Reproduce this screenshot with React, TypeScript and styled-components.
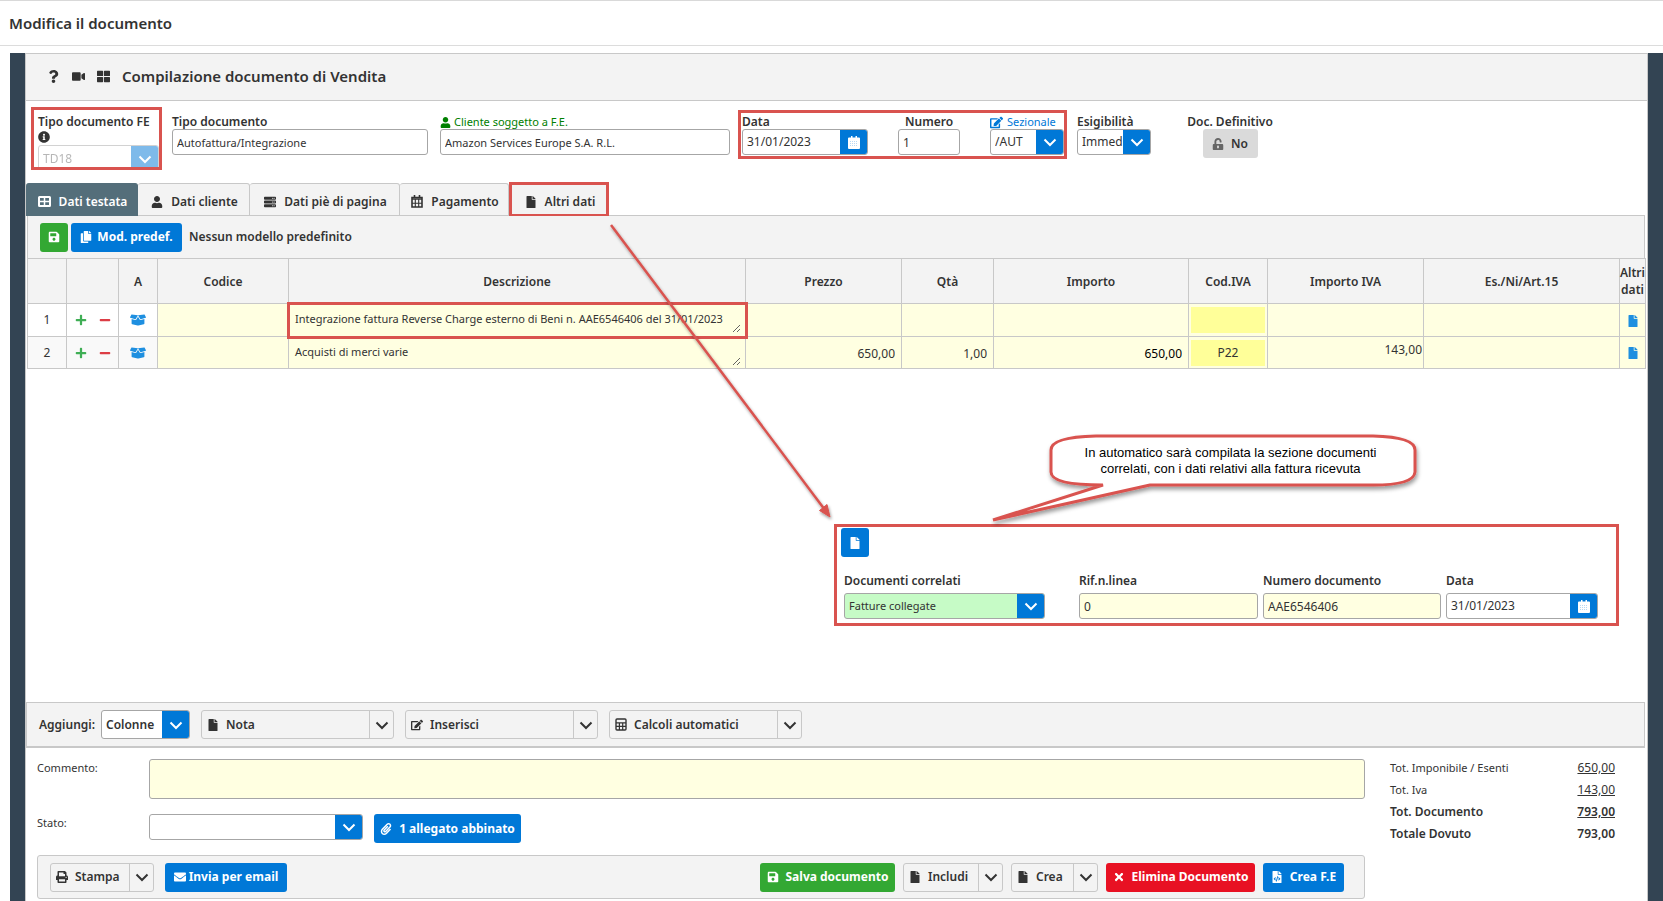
import React from 'react';
import styled, { createGlobalStyle, css } from 'styled-components';
import {
  FaQuestion, FaVideo, FaThLarge, FaInfoCircle, FaUser, FaEdit, FaUnlockAlt,
  FaServer, FaFile, FaSave, FaCopy, FaPlus, FaMinus, FaBoxOpen, FaPaperclip, FaPrint,
  FaEnvelope, FaTimes, FaFileCode,
} from 'react-icons/fa';

const red = '#d9534f';
const blue = '#0078d7';
const green = '#33a833';
const line = '#c8c8c8';
const field = '#a6a6a6';
const cream = '#ffffe1';
const grey = '#f3f3f3';
const ink = '#333';

const Global = createGlobalStyle`
  * { box-sizing: border-box; }
  body { margin: 0; background: #fff; }
  body, button, input, select, textarea {
    font-family: "Noto Sans", "Open Sans", sans-serif;
    font-size: 12px;
    line-height: 16px;
    color: ${ink};
  }
  button { cursor: pointer; }
`;

const Page = styled.div`
  min-height: 100vh;
  display: flex;
  flex-direction: column;
  border-top: 1px solid #d9d9d9;
`;
const TitleBar = styled.header`
  height: 45px;
  padding: 0 9px;
  display: flex;
  align-items: center;
  border-bottom: 1px solid #dcdcdc;
`;
const PageTitle = styled.h1`
  margin: 0;
  font-size: 15px;
  font-weight: 600;
  line-height: 20px;
`;
const Frame = styled.main`
  flex: 1;
  display: flex;
  margin: 7px 0 0 10px;
  padding: 0 15px;
  background: #334453;
`;
const Sheet = styled.div`
  position: relative;
  flex: 1;
  min-width: 0;
  display: flex;
  flex-direction: column;
  background: #fff;
  border: solid ${line};
  border-width: 1px 1px 0;
`;
const SheetHead = styled.div`
  height: 47px;
  padding: 0 0 2px 21px;
  display: flex;
  align-items: center;
  gap: 12px;
  background: ${grey};
  border-bottom: 1px solid ${line};
`;
const SheetTitle = styled.h2`
  margin: 0;
  font-size: 15px;
  font-weight: 600;
  line-height: 20px;
`;
const HeadIcon = styled.button`
  display: flex;
  padding: 0;
  border: 0;
  background: none;
  font-size: 13px;
`;

const FormRow = styled.div`
  display: grid;
  grid-template-columns: 131px 258px 288px 329px 74px 138px;
  column-gap: 10px;
  align-items: start;
  height: 82px;
  padding: 6px 0 0 5px;
`;
const outlined = css`
  border: 3px solid ${red};
`;
const TypeBox = styled.div`
  ${outlined}
  height: 63px;
  padding: 5px 0 0 4px;
  overflow: hidden;
`;
const DateBox = styled.div`
  ${outlined}
  display: flex;
  justify-content: space-between;
  height: 49px;
  margin-top: 3px;
  padding: 2px 0 0 1px;
`;
const Field = styled.div<{ $w?: number; $top?: number; $center?: boolean }>`
  display: flex;
  flex-direction: column;
  align-items: ${p => (p.$center ? 'center' : 'stretch')};
  margin-top: ${p => p.$top ?? 0}px;
  ${p => p.$w && `width: ${p.$w}px;`}
`;
const Label = styled.label<{ $tone?: string; $light?: boolean }>`
  display: flex;
  align-items: center;
  gap: 3px;
  height: 14px;
  white-space: nowrap;
  font-size: ${p => (p.$light ? 11 : 12)}px;
  font-weight: ${p => (p.$light ? 400 : 600)};
  color: ${p => p.$tone ?? ink};
`;
const LabelLink = styled.a`
  display: flex;
  align-items: center;
  gap: 4px;
  height: 14px;
  font-size: 11px;
  color: ${blue};
  text-decoration: none;
`;
const InfoLine = styled.div`
  display: flex;
  height: 16px;
  padding-top: 2px;
  font-size: 12px;
`;

const TextInput = styled.input<{ $fill?: string; $words?: boolean }>`
  width: 100%;
  height: 26px;
  padding: 0 4px;
  border: 1px solid ${field};
  border-radius: 3px;
  background: ${p => p.$fill ?? '#fff'};
  font-size: ${p => (p.$words ? 11 : 12)}px;
`;
const Combo = styled.div<{ $w?: number; $h?: number; $fill?: string; $faded?: boolean }>`
  display: flex;
  width: ${p => (p.$w ? `${p.$w}px` : '100%')};
  height: ${p => p.$h ?? 26}px;
  border: 1px solid ${field};
  border-radius: 3px;
  overflow: hidden;
  background: ${p => p.$fill ?? '#fff'};
  opacity: ${p => (p.$faded ? 0.5 : 1)};
`;
const comboPart = css`
  flex: 1;
  min-width: 0;
  padding: 0 0 0 4px;
  border: 0;
  background: transparent;
`;
const ComboSelect = styled.select<{ $bold?: boolean; $words?: boolean }>`
  ${comboPart}
  appearance: none;
  font-size: ${p => (p.$words ? 11 : 12)}px;
  font-weight: ${p => (p.$bold ? 600 : 400)};
`;
const ComboInput = styled.input`
  ${comboPart}
`;
const comboTail = css`
  display: flex;
  align-items: center;
  justify-content: center;
  width: 28px;
  margin: -1px -1px -1px 0;
  padding: 0;
  border: 0;
  flex: none;
  background: ${blue};
  color: #fff;
`;
const ComboArrow = styled.span`
  ${comboTail}
  pointer-events: none;
`;
const ComboButton = styled.button`
  ${comboTail}
`;

const Tabs = styled.nav`
  display: flex;
  height: 33px;
  margin-right: 2px;
  border-bottom: 1px solid ${line};
`;
const Tab = styled.button<{ $w: number; $active?: boolean; $marked?: boolean }>`
  display: flex;
  align-items: center;
  justify-content: center;
  gap: 8px;
  width: ${p => p.$w}px;
  height: 33px;
  padding: 4px 0 0 2px;
  border: 1px solid ${line};
  border-left-width: 0;
  border-radius: 3px 3px 0 0;
  background: ${grey};
  font-weight: 600;
  white-space: nowrap;
  ${p => p.$active && css`
    border-color: #546e7a;
    background: #546e7a;
    color: #fff;
  `}
  ${p => p.$marked && css`
    ${outlined}
    height: 35px;
    margin-top: -1px;
    border-radius: 0;
  `}
`;
const Toolbar = styled.div`
  display: flex;
  align-items: center;
  gap: 3px;
  height: 42px;
  margin: 0 2px 0 1px;
  padding: 0 13px 0 12px;
  background: ${grey};
  border: solid ${line};
  border-width: 0 1px;
`;
const ToolText = styled.span`
  margin-left: 4px;
  font-weight: 600;
`;

const SolidButton = styled.button<{ $fill: string; $w: number; $dark?: boolean; $gap?: number }>`
  display: flex;
  align-items: center;
  justify-content: center;
  gap: ${p => p.$gap ?? 7}px;
  flex: none;
  width: ${p => p.$w}px;
  height: 29px;
  padding: 0;
  border: 0;
  border-radius: 3px;
  background: ${p => p.$fill};
  color: ${p => (p.$dark ? ink : '#fff')};
  font-weight: ${p => (p.$dark ? 600 : 700)};
  white-space: nowrap;
`;

const Grid = styled.table`
  width: calc(100% - 2px);
  margin-left: 1px;
  table-layout: fixed;
  border-collapse: collapse;
  th, td { border: 1px solid ${line}; padding: 0; }
  th { height: 45px; background: ${grey}; font-weight: 600; text-align: center; line-height: 17px; }
  tbody tr { height: 33px; }
  tbody tr:last-child { height: 32px; }
`;
const Cell = styled.td<{ $fill?: string }>`
  background: ${p => p.$fill ?? '#fff'};
  text-align: center;
`;
const MarkedCell = styled(Cell)<{ $marked?: boolean }>`
  ${p => p.$marked && css`
    outline: 3px solid ${red};
    outline-offset: -1px;
  `}
`;
const CellInput = styled.input<{ $align?: string; $strong?: boolean }>`
  display: block;
  width: 100%;
  height: 28px;
  padding: 2px 6px 0;
  border: 0;
  background: transparent;
  text-align: ${p => p.$align ?? 'left'};
  color: ${p => (p.$strong ? '#000' : ink)};
`;
const CodeInput = styled.input`
  display: block;
  width: calc(100% - 4px);
  height: 26px;
  margin: 0 auto;
  padding: 0;
  border: 0;
  background: #ffff99;
  text-align: center;
`;
const Amount = styled.div`
  height: 28px;
  padding: 3px 1px 0 0;
  text-align: right;
`;
const CellText = styled.textarea`
  display: block;
  width: calc(100% - 4px);
  height: 26px;
  padding: 4px 0 0 6px;
  border: 0;
  background: transparent;
  font-size: 11px;
  overflow: hidden;
  white-space: nowrap;
  resize: both;
`;
const IconPair = styled.div`
  display: flex;
  justify-content: center;
  gap: 12px;
`;
const IconButton = styled.button<{ $tone: string; $size?: number }>`
  display: inline-flex;
  vertical-align: middle;
  padding: 0;
  border: 0;
  background: none;
  color: ${p => p.$tone};
  font-size: ${p => p.$size ?? 12}px;
`;

const Workspace = styled.section`
  flex: 1;
  min-height: 333px;
  padding: 155px 28px 0 0;
`;
const LinkedDocs = styled.div`
  ${outlined}
  width: 785px;
  height: 102px;
  margin-left: auto;
  padding: 1px 18px 0 4px;
`;
const LinkedGrid = styled.div`
  display: grid;
  grid-template-columns: 230px 179px 178px 152px;
  column-gap: 5px;
  margin: 17px 0 0 3px;
`;
const LinkedField = styled.div`
  display: flex;
  flex-direction: column;
  gap: 5px;
`;
const Arrow = styled.svg`
  position: absolute;
  left: 580px;
  top: 167px;
  pointer-events: none;
`;
const Callout = styled.div`
  position: absolute;
  top: 378px;
  right: 222px;
  width: 434px;
  height: 96px;
`;
const CalloutShape = styled.svg`
  position: absolute;
  inset: 0;
`;
const CalloutText = styled.p`
  position: relative;
  margin: 0;
  padding: 13px 4px 0 49px;
  color: #000;
  font-family: "Liberation Sans", Arial, sans-serif;
  font-size: 13px;
  text-align: center;
`;

const AddBar = styled.div`
  display: flex;
  align-items: center;
  gap: 11px;
  height: 46px;
  margin-right: 2px;
  padding-left: 12px;
  background: ${grey};
  border: 1px solid ${line};
  border-bottom-width: 2px;
`;
const AddLabel = styled.label`
  width: 51px;
  font-weight: 600;
`;
const Split = styled.div<{ $w: number }>`
  display: flex;
  flex: none;
  width: ${p => p.$w}px;
  height: 29px;
  border: 1px solid ${line};
  border-radius: 3px;
`;
const SplitMain = styled.button`
  display: flex;
  align-items: center;
  gap: 7px;
  flex: 1;
  min-width: 0;
  padding: 0 0 0 5px;
  border: 0;
  background: none;
  font-weight: 600;
`;
const SplitArrow = styled.button`
  display: flex;
  align-items: center;
  justify-content: center;
  width: 24px;
  padding: 0;
  border: 0;
  border-left: 1px solid ${line};
  background: none;
`;

const Bottom = styled.div`
  display: grid;
  grid-template-columns: minmax(0, 1fr) 225px;
  column-gap: 25px;
  padding: 11px 32px 2px 11px;
`;
const Line = styled.div<{ $gap: number }>`
  display: flex;
  align-items: flex-start;
  gap: 11px;
  margin-bottom: ${p => p.$gap}px;
`;
const LineLabel = styled.label`
  flex: none;
  width: 101px;
  font-size: 11px;
  line-height: 18px;
`;
const Comment = styled.textarea`
  flex: 1;
  height: 40px;
  border: 1px solid ${field};
  border-radius: 3px;
  background: ${cream};
  resize: none;
`;
const Actions = styled.div`
  display: flex;
  justify-content: space-between;
  height: 44px;
  padding: 0 20px 0 12px;
  background: ${grey};
  border: 1px solid ${line};
  border-radius: 3px;
`;
const ActionGroup = styled.div<{ $gap: number }>`
  display: flex;
  align-items: center;
  gap: ${p => p.$gap}px;
`;
const Totals = styled.dl`
  margin: -2px 0 0;
`;
const TotalRow = styled.div<{ $bold?: boolean; $underline?: boolean }>`
  display: flex;
  justify-content: space-between;
  line-height: 22px;
  font-weight: ${p => (p.$bold ? 600 : 400)};
  dt { font-size: ${p => (p.$bold ? 12 : 11)}px; }
  dd { margin: 0; ${p => p.$underline && 'text-decoration: underline;'} }
`;

const Chevron = () => (
  <svg width="14" height="14" viewBox="0 0 14 14" fill="none" stroke="currentColor" strokeWidth="2" aria-hidden="true">
    <path d="M1.5 4.5 7 10l5.500-5.500" />
  </svg>
);
const Calculator = () => (
  <svg width="12" height="13" viewBox="0 0 12 13" fill="none" stroke="currentColor" aria-hidden="true">
    <rect x="1" y="1" width="10" height="11" rx="1" strokeWidth="1.400" />
    <path d="M1 4.800h10M1 8.300h10M4.400 4.800V12M7.700 4.800V12" strokeWidth="1.200" />
  </svg>
);
const TableIcon = () => (
  <svg width="13" height="11" viewBox="0 0 13 11" fill="none" stroke="currentColor" strokeWidth="2" aria-hidden="true">
    <rect x="1" y="1" width="11" height="9" rx="0.500" />
    <path d="M6.500 1v9M1 5.500h11" strokeWidth="1.500" />
  </svg>
);
const CalendarGrid = () => (
  <svg width="12" height="13" viewBox="0 0 12 13" fill="none" stroke="currentColor" aria-hidden="true">
    <path d="M1 2.500h10v9.500H1zM3.500 0v3M8.500 0v3" strokeWidth="1.600" />
    <path d="M1 4h10" strokeWidth="1.500" />
    <path d="M1 8.200h10M4.300 4v8M7.700 4v8" strokeWidth="1.100" />
  </svg>
);
const CalendarIcon = () => (
  <svg width="12" height="13" viewBox="0 0 12 13" aria-hidden="true">
    <path fill="#fff" d="M1 1.500h2V0h1.500v1.500h3V0H9v1.500h2a1 1 0 0 1 1 1V12a1 1 0 0 1-1 1H1a1 1 0 0 1-1-1V2.500a1 1 0 0 1 1-1z" />
    <path fill="none" stroke="#b9d9f4" strokeDasharray="1 1" d="M2 5.500h8M2 7.500h8M2 9.500h8" />
  </svg>
);

type SplitProps = { w: number; icon: React.ReactNode; text: string };
const SplitButton = ({ w, icon, text }: SplitProps) => (
  <Split $w={w}>
    <SplitMain type="button">{icon}{text}</SplitMain>
    <SplitArrow type="button" aria-label={`${text}: altre opzioni`}><Chevron /></SplitArrow>
  </Split>
);

const columns: [string, number | undefined][] = [
  ['', 39], ['', 52], ['A', 39], ['Codice', 131], ['Descrizione', undefined], ['Prezzo', 156],
  ['Qtà', 92], ['Importo', 195], ['Cod.IVA', 79], ['Importo IVA', 156], ['Es./Ni/Art.15', 196], ['Altri dati', 26],
];
const rows = [
  { n: 1, text: 'Integrazione fattura Reverse Charge esterno di Beni n. AAE6546406 del 31/01/2023', price: '', qty: '', total: '', code: '', vat: '', marked: true },
  { n: 2, text: 'Acquisti di merci varie', price: '650,00', qty: '1,00', total: '650,00', code: 'P22', vat: '143,00', marked: false },
];
const totals = [
  { name: 'Tot. Imponibile / Esenti', value: '650,00', underline: true, bold: false },
  { name: 'Tot. Iva', value: '143,00', underline: true, bold: false },
  { name: 'Tot. Documento', value: '793,00', underline: true, bold: true },
  { name: 'Totale Dovuto', value: '793,00', underline: false, bold: true },
];

export default function App() {
  return (
    <Page>
      <Global />
      <TitleBar><PageTitle>Modifica il documento</PageTitle></TitleBar>
      <Frame>
        <Sheet>
          <SheetHead>
            <HeadIcon type="button" aria-label="Aiuto"><FaQuestion /></HeadIcon>
            <HeadIcon type="button" aria-label="Video"><FaVideo /></HeadIcon>
            <HeadIcon type="button" aria-label="Finestre"><FaThLarge /></HeadIcon>
            <SheetTitle>Compilazione documento di Vendita</SheetTitle>
          </SheetHead>

          <FormRow>
            <TypeBox>
              <Label htmlFor="tipoFe">Tipo documento FE</Label>
              <InfoLine><FaInfoCircle /></InfoLine>
              <Combo $w={121} $h={28} $faded>
                <ComboSelect id="tipoFe" disabled><option>TD18</option></ComboSelect>
                <ComboArrow><Chevron /></ComboArrow>
              </Combo>
            </TypeBox>
            <Field $w={256} $top={8}>
              <Label htmlFor="tipo">Tipo documento</Label>
              <TextInput id="tipo" $words defaultValue="Autofattura/Integrazione" />
            </Field>
            <Field $w={290} $top={8}>
              <Label htmlFor="cliente" $light $tone="#008000"><FaUser />Cliente soggetto a F.E.</Label>
              <TextInput id="cliente" $words defaultValue="Amazon Services Europe S.A. R.L." />
            </Field>
            <DateBox>
              <Field $w={126}>
                <Label htmlFor="data">Data</Label>
                <Combo>
                  <ComboInput id="data" defaultValue="31/01/2023" />
                  <ComboButton type="button" aria-label="Scegli la data"><CalendarIcon /></ComboButton>
                </Combo>
              </Field>
              <Field $w={62} $center>
                <Label htmlFor="numero">Numero</Label>
                <TextInput id="numero" defaultValue="1" />
              </Field>
              <Field $w={74}>
                <LabelLink href="#sezionale"><FaEdit size={13} />Sezionale</LabelLink>
                <Combo>
                  <ComboSelect aria-label="Sezionale"><option>/AUT</option></ComboSelect>
                  <ComboArrow><Chevron /></ComboArrow>
                </Combo>
              </Field>
            </DateBox>
            <Field $top={8}>
              <Label htmlFor="esig">Esigibilità</Label>
              <Combo>
                <ComboSelect id="esig"><option>Immediata</option></ComboSelect>
                <ComboArrow><Chevron /></ComboArrow>
              </Combo>
            </Field>
            <Field $top={8} $center>
              <Label htmlFor="definitivo">Doc. Definitivo</Label>
              <SolidButton type="button" id="definitivo" $fill="#dadada" $w={55} $dark><FaUnlockAlt color="#666" />No</SolidButton>
            </Field>
          </FormRow>

          <Tabs>
            <Tab type="button" $w={112} $active><TableIcon />Dati testata</Tab>
            <Tab type="button" $w={112}><FaUser />Dati cliente</Tab>
            <Tab type="button" $w={150}><FaServer />Dati piè di pagina</Tab>
            <Tab type="button" $w={109}><CalendarGrid />Pagamento</Tab>
            <Tab type="button" $w={100} $marked><FaFile />Altri dati</Tab>
          </Tabs>
          <Toolbar>
            <SolidButton type="button" $fill={green} $w={28} aria-label="Salva modello"><FaSave /></SolidButton>
            <SolidButton type="button" $fill={blue} $w={111} $gap={5}><FaCopy />Mod. predef.</SolidButton>
            <ToolText>Nessun modello predefinito</ToolText>
          </Toolbar>

          <Grid>
            <colgroup>{columns.map(([, w], i) => <col key={i} width={w} />)}</colgroup>
            <thead>
              <tr>{columns.map(([name], i) => <th key={i} scope="col">{name}</th>)}</tr>
            </thead>
            <tbody>
              {rows.map(r => {
                const side = r.n === 2 ? '#f9f9f9' : '#fff';
                return (
                  <tr key={r.n}>
                    <Cell $fill={side}>{r.n}</Cell>
                    <Cell $fill={side}>
                      <IconPair>
                        <IconButton type="button" $tone="#3fae55" aria-label="Aggiungi riga"><FaPlus /></IconButton>
                        <IconButton type="button" $tone="#dc3d45" aria-label="Elimina riga"><FaMinus /></IconButton>
                      </IconPair>
                    </Cell>
                    <Cell $fill={side}><IconButton type="button" $tone="#1e8fe0" $size={16} aria-label="Articolo"><FaBoxOpen /></IconButton></Cell>
                    <Cell $fill={cream}><CellInput aria-label="Codice" /></Cell>
                    <MarkedCell $fill={cream} $marked={r.marked}><CellText aria-label="Descrizione" defaultValue={r.text} /></MarkedCell>
                    <Cell $fill={cream}><CellInput aria-label="Prezzo" $align="right" defaultValue={r.price} /></Cell>
                    <Cell $fill={cream}><CellInput aria-label="Quantità" $align="right" defaultValue={r.qty} /></Cell>
                    <Cell $fill={cream}><CellInput aria-label="Importo" $align="right" $strong defaultValue={r.total} /></Cell>
                    <Cell $fill={cream}><CodeInput aria-label="Codice IVA" defaultValue={r.code} /></Cell>
                    <Cell $fill={cream}><Amount>{r.vat}</Amount></Cell>
                    <Cell $fill={cream} />
                    <Cell $fill={cream}><IconButton type="button" $tone="#1e8fe0" aria-label="Altri dati"><FaFile /></IconButton></Cell>
                  </tr>
                );
              })}
            </tbody>
          </Grid>

          <Workspace>
            <LinkedDocs>
              <SolidButton type="button" $fill={blue} $w={28} aria-label="Nuovo documento"><FaFile /></SolidButton>
              <LinkedGrid>
                <LinkedField>
                  <Label htmlFor="correlati">Documenti correlati</Label>
                  <Combo $w={201} $fill="#c6fbc6">
                    <ComboSelect id="correlati" $words><option>Fatture collegate</option></ComboSelect>
                    <ComboArrow><Chevron /></ComboArrow>
                  </Combo>
                </LinkedField>
                <LinkedField>
                  <Label htmlFor="rif">Rif.n.linea</Label>
                  <TextInput id="rif" $fill={cream} defaultValue="0" />
                </LinkedField>
                <LinkedField>
                  <Label htmlFor="numdoc">Numero documento</Label>
                  <TextInput id="numdoc" $fill={cream} defaultValue="AAE6546406" />
                </LinkedField>
                <LinkedField>
                  <Label htmlFor="datadoc">Data</Label>
                  <Combo>
                    <ComboInput id="datadoc" defaultValue="31/01/2023" />
                    <ComboButton type="button" aria-label="Scegli la data"><CalendarIcon /></ComboButton>
                  </Combo>
                </LinkedField>
              </LinkedGrid>
            </LinkedDocs>
          </Workspace>

          <AddBar>
            <AddLabel htmlFor="colonne">Aggiungi:</AddLabel>
            <Combo $w={89} $h={29}>
              <ComboSelect id="colonne" $bold><option>Colonne</option></ComboSelect>
              <ComboArrow><Chevron /></ComboArrow>
            </Combo>
            <SplitButton w={193} icon={<FaFile />} text="Nota" />
            <SplitButton w={193} icon={<FaEdit />} text="Inserisci" />
            <SplitButton w={193} icon={<Calculator />} text="Calcoli automatici" />
          </AddBar>

          <Bottom>
            <div>
              <Line $gap={15}>
                <LineLabel htmlFor="commento">Commento:</LineLabel>
                <Comment id="commento" />
              </Line>
              <Line $gap={12}>
                <LineLabel htmlFor="stato">Stato:</LineLabel>
                <Combo $w={214}>
                  <ComboSelect id="stato" defaultValue=""><option value="" /></ComboSelect>
                  <ComboArrow><Chevron /></ComboArrow>
                </Combo>
                <SolidButton type="button" $fill={blue} $w={147}><FaPaperclip />1 allegato abbinato</SolidButton>
              </Line>
              <Actions>
                <ActionGroup $gap={11}>
                  <SplitButton w={104} icon={<FaPrint />} text="Stampa" />
                  <SolidButton type="button" $fill={blue} $w={122} $gap={3}><FaEnvelope />Invia per email</SolidButton>
                </ActionGroup>
                <ActionGroup $gap={8}>
                  <SolidButton type="button" $fill={green} $w={135}><FaSave />Salva documento</SolidButton>
                  <SplitButton w={100} icon={<FaFile />} text="Includi" />
                  <SplitButton w={87} icon={<FaFile />} text="Crea" />
                  <SolidButton type="button" $fill="#e81123" $w={149}><FaTimes />Elimina Documento</SolidButton>
                  <SolidButton type="button" $fill={blue} $w={81}><FaFileCode />Crea F.E</SolidButton>
                </ActionGroup>
              </Actions>
            </div>
            <Totals>
              {totals.map(t => (
                <TotalRow key={t.name} $bold={t.bold} $underline={t.underline}>
                  <dt>{t.name}</dt><dd>{t.value}</dd>
                </TotalRow>
              ))}
            </Totals>
          </Bottom>

          <Arrow width="232" height="302" viewBox="0 0 232 302" aria-hidden="true">
            <defs>
              <filter id="arrowShadow" x="-10%" y="-10%" width="120%" height="120%">
                <feDropShadow dx="1" dy="2" stdDeviation="1.500" floodOpacity="0.4" />
              </filter>
            </defs>
            <g filter="url(#arrowShadow)" stroke={red} fill={red}>
              <path d="M5 4 219 289" strokeWidth="2.500" />
              <path d="M224 296 213.500 289.500 221 283.500z" strokeWidth="1" />
            </g>
          </Arrow>
          <Callout>
            <CalloutShape width="434" height="96" viewBox="0 0 434 96" aria-hidden="true">
              <defs>
                <filter id="calloutShadow" x="-5%" y="-10%" width="110%" height="125%">
                  <feDropShadow dx="1" dy="3" stdDeviation="2" floodOpacity="0.4" />
                </filter>
              </defs>
              <path
                d="M105 4H382Q424 5 424 18V40Q423 53 382 53H159L2 88 112 53Q60 53 60 40V18Q60 5 105 4z"
                fill="#fff" stroke={red} strokeWidth="3" strokeLinejoin="bevel" filter="url(#calloutShadow)"
              />
            </CalloutShape>
            <CalloutText>In automatico sarà compilata la sezione documenti<br />correlati, con i dati relativi alla fattura ricevuta</CalloutText>
          </Callout>
        </Sheet>
      </Frame>
    </Page>
  );
}
